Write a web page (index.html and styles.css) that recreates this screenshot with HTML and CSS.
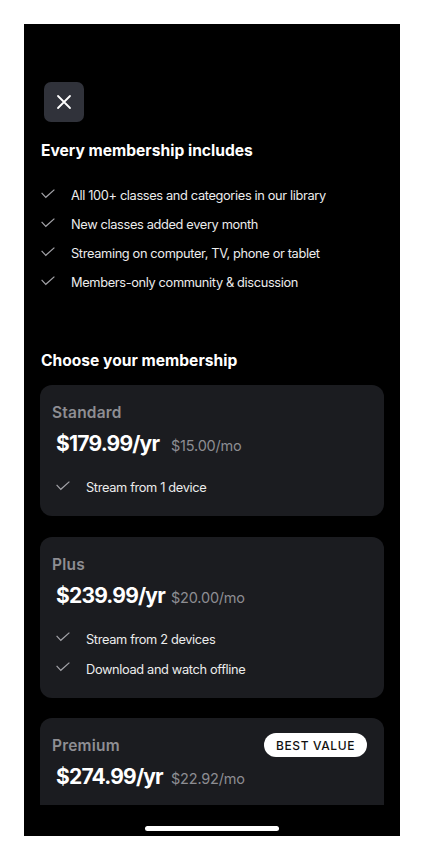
FILE: index.html
```html
<!DOCTYPE html>
<html lang="en">
<head>
<meta charset="utf-8">
<title>Membership</title>
<link rel="stylesheet" href="styles.css">
</head>
<body>
<div class="phone">
  <div class="scroll">
    <button class="close" aria-label="Close">
      <svg width="16" height="16" viewBox="0 0 16 16"><path d="M2 2L14 14M14 2L2 14" stroke="#fff" stroke-width="1.8" stroke-linecap="round"/></svg>
    </button>

    <h2 class="heading first">Every membership includes</h2>
    <ul class="checks">
      <li><svg class="chk" viewBox="0 0 14 10"><path d="M0.6 3.8L4.8 8.3L13.4 0.6" fill="none" stroke="#a3a3a8" stroke-width="1.2"/></svg>All 100+ classes and categories in our library</li>
      <li><svg class="chk" viewBox="0 0 14 10"><path d="M0.6 3.8L4.8 8.3L13.4 0.6" fill="none" stroke="#a3a3a8" stroke-width="1.2"/></svg>New classes added every month</li>
      <li><svg class="chk" viewBox="0 0 14 10"><path d="M0.6 3.8L4.8 8.3L13.4 0.6" fill="none" stroke="#a3a3a8" stroke-width="1.2"/></svg>Streaming on computer, TV, phone or tablet</li>
      <li><svg class="chk" viewBox="0 0 14 10"><path d="M0.6 3.8L4.8 8.3L13.4 0.6" fill="none" stroke="#a3a3a8" stroke-width="1.2"/></svg>Members-only community &amp; discussion</li>
    </ul>

    <h2 class="heading second">Choose your membership</h2>

    <div class="cards">
      <div class="card">
        <div class="card-top"><span class="plan">Standard</span></div>
        <div class="price"><span class="yr">$179.99/yr</span><span class="mo">$15.00/mo</span></div>
        <ul class="feats">
          <li><svg class="chk" viewBox="0 0 14 10"><path d="M0.6 3.8L4.8 8.3L13.4 0.6" fill="none" stroke="#a3a3a8" stroke-width="1.2"/></svg>Stream from 1 device</li>
        </ul>
      </div>

      <div class="card">
        <div class="card-top"><span class="plan">Plus</span></div>
        <div class="price"><span class="yr">$239.99/yr</span><span class="mo">$20.00/mo</span></div>
        <ul class="feats">
          <li><svg class="chk" viewBox="0 0 14 10"><path d="M0.6 3.8L4.8 8.3L13.4 0.6" fill="none" stroke="#a3a3a8" stroke-width="1.2"/></svg>Stream from 2 devices</li>
          <li><svg class="chk" viewBox="0 0 14 10"><path d="M0.6 3.8L4.8 8.3L13.4 0.6" fill="none" stroke="#a3a3a8" stroke-width="1.2"/></svg>Download and watch offline</li>
        </ul>
      </div>

      <div class="card card-cut">
        <div class="card-top"><span class="plan">Premium</span><span class="badge">BEST VALUE</span></div>
        <div class="price"><span class="yr">$274.99/yr</span><span class="mo">$22.92/mo</span></div>
      </div>
    </div>
  </div>
  <div class="home-area"><div class="home-bar"></div></div>
</div>
</body>
</html>
```

FILE: styles.css
```css
* { box-sizing: border-box; }
html, body { margin: 0; padding: 0; background: #fff; }
body { font-family: Inter, "Noto Sans", sans-serif; -webkit-font-smoothing: antialiased; }

.phone {
  margin: 24px;
  width: 376px;
  height: 812px;
  background: #000;
  display: flex;
  flex-direction: column;
  overflow: hidden;
}
.scroll {
  flex: 1;
  overflow: hidden;
  padding: 58px 16px 0 16px;
  display: flex;
  flex-direction: column;
}
.close {
  width: 40px;
  height: 40px;
  margin-left: 4px;
  border: 0;
  padding: 0;
  border-radius: 7px;
  background: #30323a;
  display: flex;
  align-items: center;
  justify-content: center;
  flex-shrink: 0;
}
.heading {
  margin: 0;
  padding-left: 1px;
  color: #fff;
  font-size: 15.6px;
  line-height: 20px;
  font-weight: 700;
  letter-spacing: 0;
}
.heading.first { margin-top: 19px; }
.heading.second { margin-top: 54px; }

.checks {
  list-style: none;
  margin: 20px 0 0;
  padding: 0 0 0 1px;
}
.checks li {
  height: 29px;
  display: flex;
  align-items: center;
  color: #ececec;
  font-size: 12.8px;
  letter-spacing: -0.35px;
}
.checks .chk { width: 14px; height: 10px; margin-right: 16px; flex-shrink: 0; margin-top: -4px; }

.cards {
  margin-top: 14px;
  display: flex;
  flex-direction: column;
  gap: 20.5px;
}
.card {
  background: #1b1c20;
  border-radius: 12px;
  padding: 18px 17px 13.5px 12px;
  flex-shrink: 0;
}
.card.card-cut { padding-bottom: 48px; }
.card-top {
  display: flex;
  align-items: center;
  justify-content: space-between;
  height: 20px;
}
.plan {
  color: #8e8e93;
  font-size: 15.5px;
  font-weight: 600;
  line-height: 20px;
  letter-spacing: 0.2px;
}
.badge {
  background: #fff;
  color: #111;
  font-size: 12px;
  font-weight: 500;
  letter-spacing: 0.6px;
  height: 24px;
  width: 103px;
  border-radius: 12px;
  display: flex;
  align-items: center;
  justify-content: center;
  margin-top: -2px;
}
.price {
  margin-top: 7px;
  padding-left: 4px;
  height: 28px;
  line-height: 28px;
  display: flex;
  align-items: baseline;
}
.yr {
  color: #fff;
  font-size: 21px;
  font-weight: 700;
  letter-spacing: -0.8px;
  width: 115px;
  flex-shrink: 0;
  white-space: nowrap;
}
.mo {
  color: #8d8d92;
  font-size: 14.5px;
  letter-spacing: -0.2px;
}
.feats {
  list-style: none;
  margin: 14.5px 0 0;
  padding: 0 0 0 4px;
}
.feats li {
  height: 30px;
  display: flex;
  align-items: center;
  color: #ececec;
  font-size: 12.8px;
  letter-spacing: -0.35px;
}
.feats .chk { width: 14px; height: 10px; margin-right: 16px; flex-shrink: 0; margin-top: -4px; }

.home-area {
  height: 31px;
  flex-shrink: 0;
  display: flex;
  justify-content: center;
  padding-top: 21px;
}
.home-bar {
  width: 134px;
  height: 5px;
  border-radius: 3px;
  background: #fff;
}
```
